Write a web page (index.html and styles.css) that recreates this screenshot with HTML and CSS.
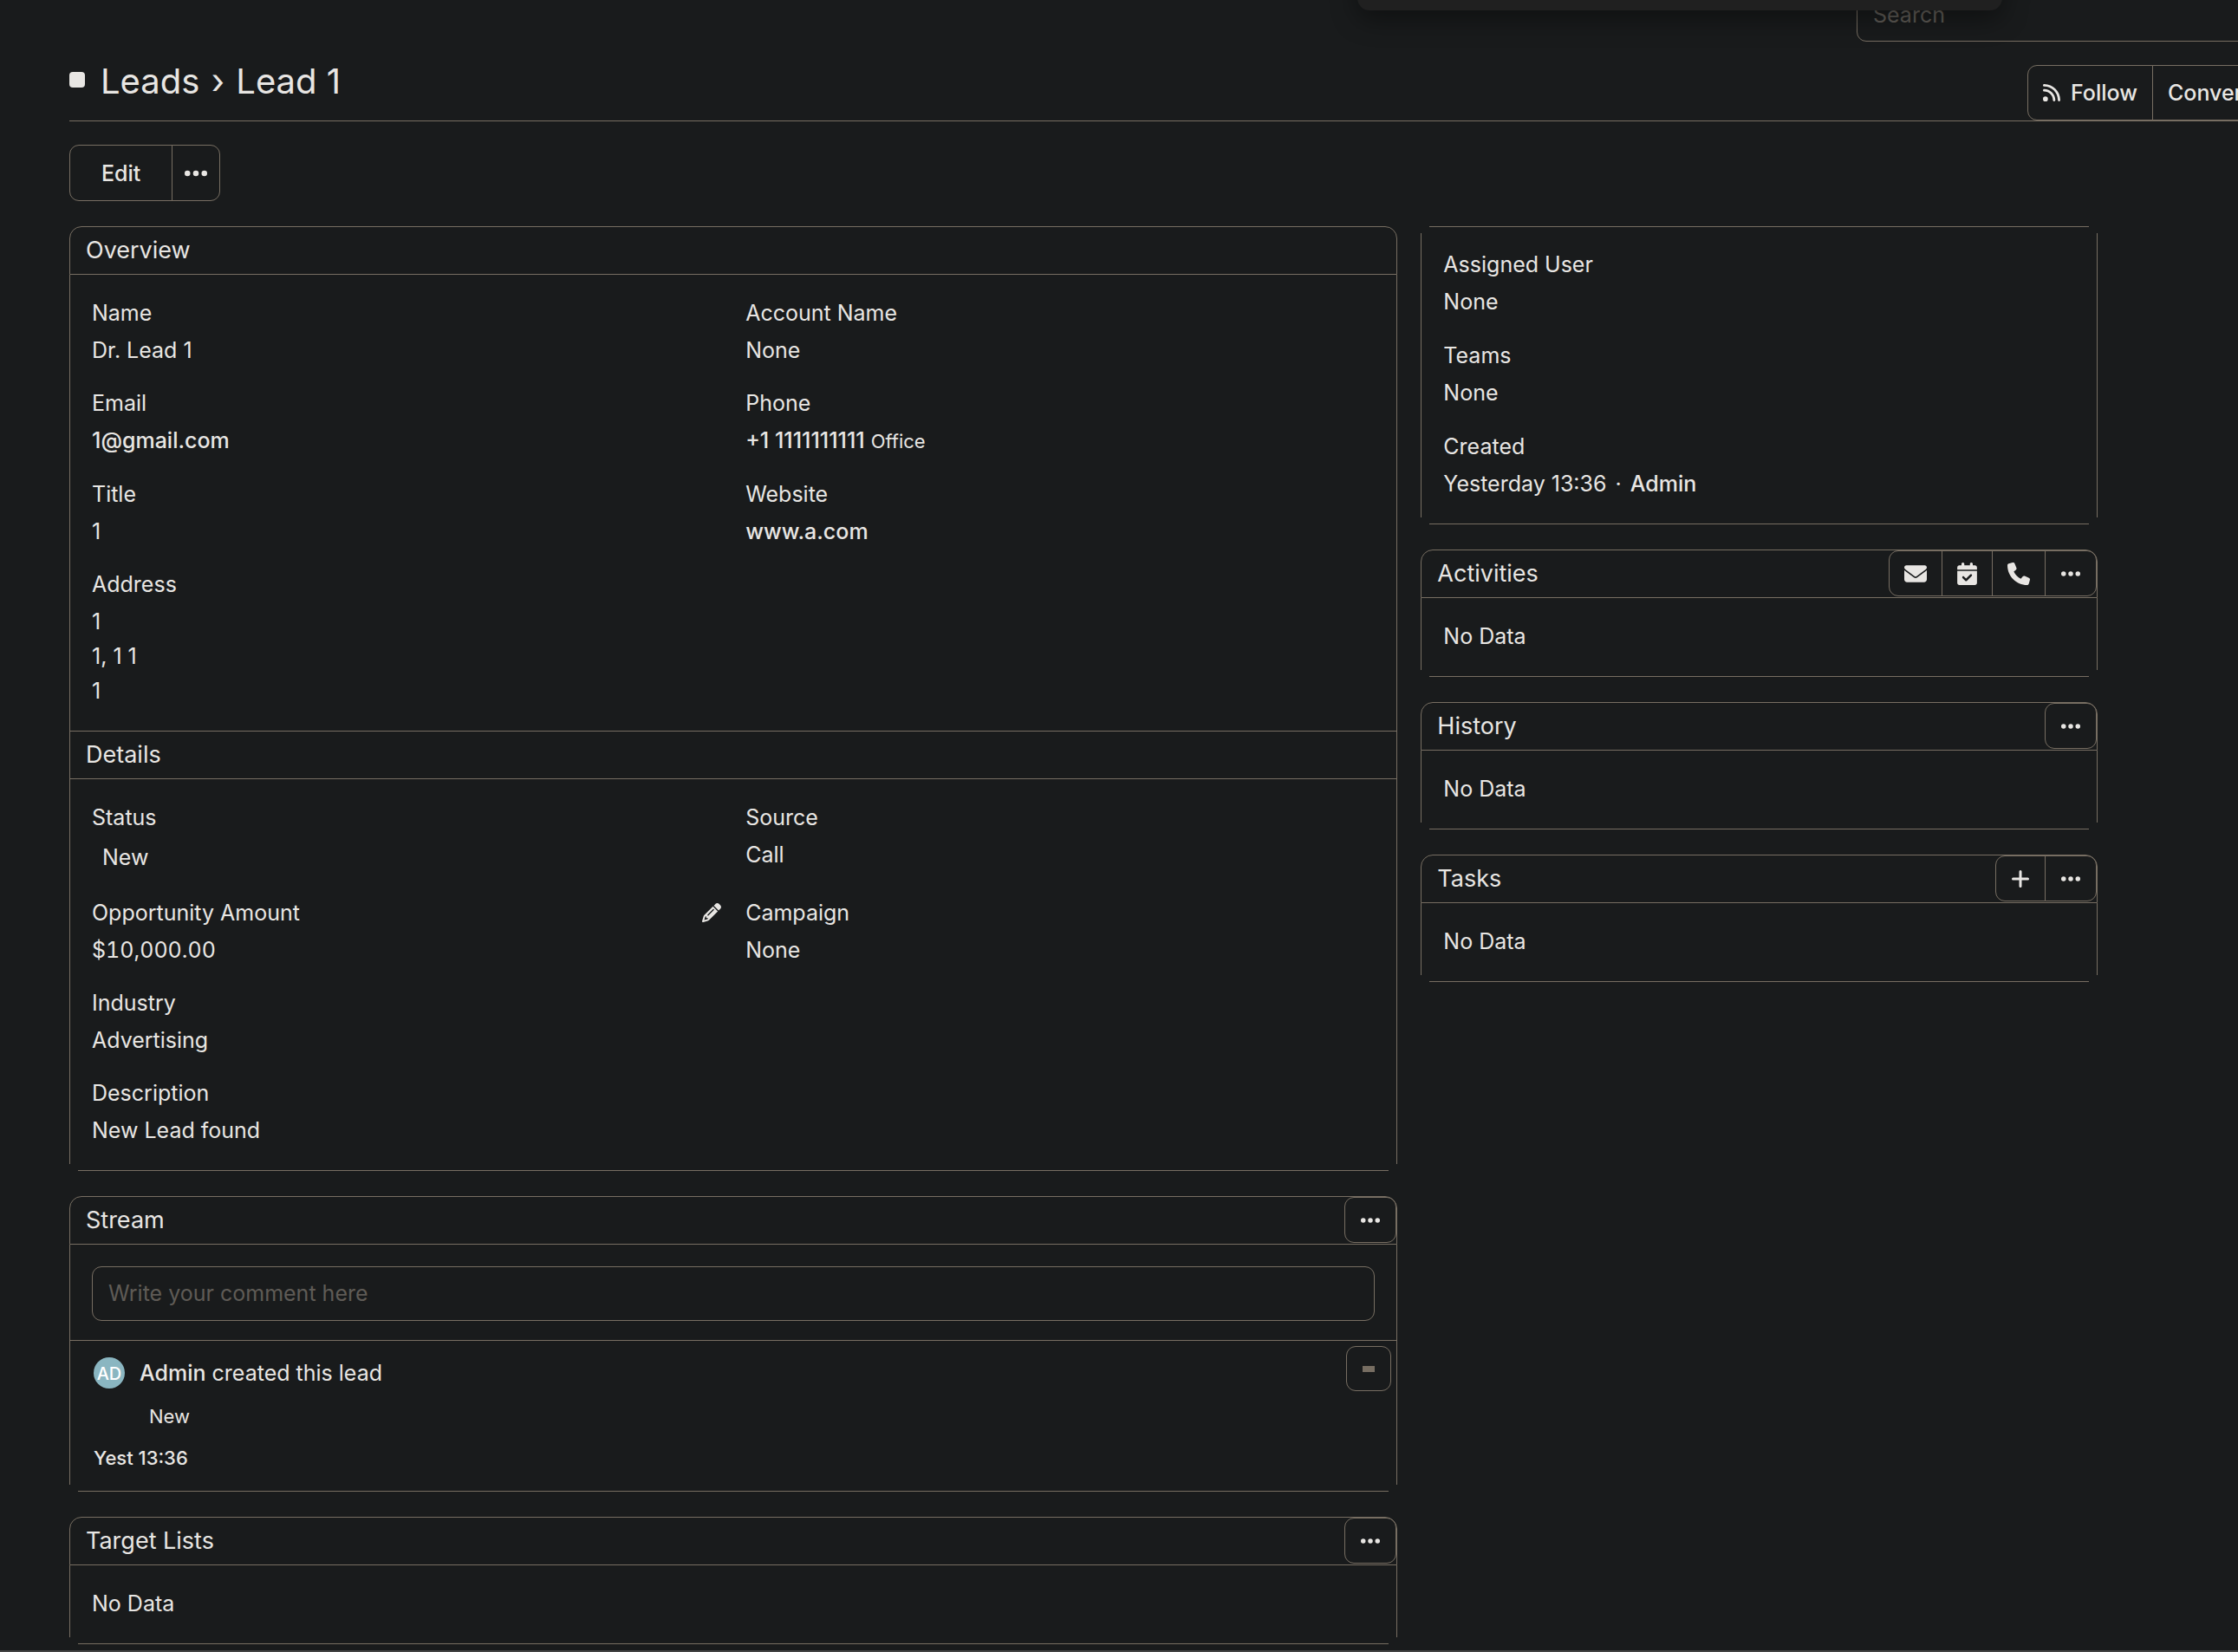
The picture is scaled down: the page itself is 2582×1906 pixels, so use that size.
FILE: index.html
```
<!DOCTYPE html>
<html lang="en">
<head>
  <meta charset="UTF-8">
  <title>Lead 1</title>
  <link rel="stylesheet" href="styles.css">
</head>
<body>

  <!-- Icons -->
  <svg class="sprite" aria-hidden="true">
    <symbol id="i-dots" viewBox="0 0 448 112"><circle cx="56" cy="56" r="56"/><circle cx="224" cy="56" r="56"/><circle cx="392" cy="56" r="56"/></symbol>
    <symbol id="i-rss" viewBox="0 32 448 448"><path d="M0 64C0 46.3 14.3 32 32 32c229.8 0 416 186.2 416 416c0 17.7-14.3 32-32 32s-32-14.3-32-32C384 253.6 226.4 96 32 96C14.3 96 0 81.7 0 64zM0 416a64 64 0 1 1 128 0A64 64 0 1 1 0 416zM32 160c159.1 0 288 128.9 288 288c0 17.7-14.3 32-32 32s-32-14.3-32-32c0-123.7-100.3-224-224-224c-17.7 0-32-14.3-32-32s14.3-32 32-32z"/></symbol>
    <symbol id="i-mail" viewBox="0 0 512 512"><path d="M48 64C21.5 64 0 85.5 0 112c0 15.1 7.1 29.3 19.2 38.4L236.8 313.6c11.4 8.5 27 8.5 38.4 0L492.8 150.4c12.1-9.1 19.2-23.3 19.2-38.4c0-26.5-21.5-48-48-48L48 64zM0 176L0 384c0 35.3 28.7 64 64 64l384 0c35.3 0 64-28.7 64-64l0-208L294.4 339.2c-22.8 17.1-54 17.1-76.8 0L0 176z"/></symbol>
    <symbol id="i-calendar" viewBox="0 0 448 512"><path fill-rule="evenodd" d="M128 0c17.7 0 32 14.3 32 32l0 32 128 0 0-32c0-17.7 14.3-32 32-32s32 14.3 32 32l0 32 48 0c26.5 0 48 21.5 48 48l0 48L0 160l0-48C0 85.5 21.5 64 48 64l48 0 0-32c0-17.7 14.3-32 32-32zM0 192l448 0 0 272c0 26.5-21.5 48-48 48L48 512c-26.5 0-48-21.5-48-48L0 192zM329 305c9.4-9.4 9.4-24.6 0-33.9s-24.6-9.4-33.9 0l-95 95-47-47c-9.4-9.4-24.6-9.4-33.9 0s-9.4 24.6 0 33.9l64 64c9.4 9.4 24.6 9.4 33.9 0L329 305z"/></symbol>
    <symbol id="i-phone" viewBox="0 0 512 512"><path d="M164.9 24.6c-7.7-18.6-28-28.5-47.4-23.2l-88 24C12.1 30.2 0 46 0 64C0 311.4 200.6 512 448 512c18 0 33.8-12.1 38.6-29.5l24-88c5.3-19.4-4.6-39.7-23.2-47.4l-96-40c-16.3-6.8-35.2-2.1-46.3 11.6L304.7 368C234.3 334.7 177.3 277.7 144 207.3L193.3 167c13.7-11.2 18.4-30 11.6-46.3l-40-96z"/></symbol>
    <symbol id="i-plus" viewBox="0 0 20 20"><path d="M10 1.500V18.500M1.500 10H18.500" fill="none" stroke="currentColor" stroke-width="3" stroke-linecap="round"/></symbol>
    <symbol id="i-pencil" viewBox="0 0 512 512"><path d="M410.3 231l11.3-11.3-33.9-33.9-62.1-62.1L291.7 89.8l-11.3 11.3-22.6 22.6L58.6 322.9c-10.4 10.4-18 23.3-22.2 37.4L1 480.7c-2.5 8.4-.2 17.5 6.1 23.7s15.3 8.5 23.7 6.1l120.3-35.4c14.1-4.2 27-11.8 37.4-22.2L387.7 253.7 410.3 231zM160 399.4l-9.1 22.7c-4 3.1-8.5 5.4-13.3 6.9L59.4 452l23-78.1c1.4-4.9 3.8-9.4 6.9-13.3l22.7-9.1 0 32c0 8.8 7.2 16 16 16l32 0zM362.7 18.7L348.3 33.2 325.7 55.8 314.3 67.1l33.9 33.9 62.1 62.1 33.9 33.9 11.3-11.3 22.6-22.6 14.5-14.5c25-25 25-65.5 0-90.5L453.3 18.7c-25-25-65.5-25-90.5 0zm-47.4 168l-144 144c-6.2 6.2-16.4 6.2-22.6 0s-6.2-16.4 0-22.6l144-144c6.2-6.2 16.4-6.2 22.6 0s6.2 16.4 0 22.6z"/></symbol>
  </svg>

  <div class="popover"></div>

  <nav class="navbar">
    <input class="search" type="text" placeholder="Search" aria-label="Search">
  </nav>

  <header class="page-header">
    <h1><span class="scope-icon"></span><a href="#leads">Leads</a> <span class="crumb">›</span> <span>Lead 1</span></h1>
    <div class="header-buttons btn-group">
      <button class="btn"><svg class="icon-rss"><use href="#i-rss"/></svg>Follow</button>
      <button class="btn">Convert</button>
    </div>
  </header>

  <main class="detail">
    <div class="btn-group">
      <button class="btn btn-edit">Edit</button>
      <button class="btn btn-more" aria-label="More"><svg class="dots-lg"><use href="#i-dots"/></svg></button>
    </div>

    <div class="columns">
      <div class="column">

        <section class="panel">
          <div class="panel-heading"><h2>Overview</h2></div>
          <dl class="panel-body fields joined">
            <div><dt>Name</dt><dd>Dr. Lead 1</dd></div>
            <div><dt>Account Name</dt><dd>None</dd></div>
            <div><dt>Email</dt><dd><a href="mailto:1@gmail.com">1@gmail.com</a></dd></div>
            <div><dt>Phone</dt><dd><a href="tel:+11111111111">+1 1111111111</a> <small>Office</small></dd></div>
            <div><dt>Title</dt><dd>1</dd></div>
            <div><dt>Website</dt><dd><a href="#website">www.a.com</a></dd></div>
            <div class="wide"><dt>Address</dt><dd>1<br>1, 1 1<br>1</dd></div>
          </dl>
          <div class="panel-heading inner"><h2>Details</h2></div>
          <dl class="panel-body fields">
            <div><dt>Status</dt><dd class="label-state">New</dd></div>
            <div><dt>Source</dt><dd>Call</dd></div>
            <div><dt>Opportunity Amount <button class="inline-edit" aria-label="Edit amount"><svg><use href="#i-pencil"/></svg></button></dt><dd class="currency">$10,000.00</dd></div>
            <div><dt>Campaign</dt><dd>None</dd></div>
            <div class="wide"><dt>Industry</dt><dd>Advertising</dd></div>
            <div class="wide"><dt>Description</dt><dd>New Lead found</dd></div>
          </dl>
        </section>

        <section class="panel">
          <div class="panel-heading">
            <h2>Stream</h2>
            <div class="btn-group">
              <button class="btn" aria-label="Stream menu"><svg class="dots"><use href="#i-dots"/></svg></button>
            </div>
          </div>
          <div class="post">
            <textarea rows="1" placeholder="Write your comment here" aria-label="Comment"></textarea>
          </div>
          <div class="panel-body note">
            <div class="note-head">
              <span class="avatar">AD</span>
              <span><a href="#admin">Admin</a> created this lead</span>
            </div>
            <div class="note-state">New</div>
            <div class="note-date"><a href="#note">Yest 13:36</a></div>
            <button class="btn note-menu" aria-label="Note menu"><span class="bar"></span></button>
          </div>
        </section>

        <section class="panel">
          <div class="panel-heading">
            <h2>Target Lists</h2>
            <div class="btn-group">
              <button class="btn" aria-label="Target Lists menu"><svg class="dots"><use href="#i-dots"/></svg></button>
            </div>
          </div>
          <div class="panel-body">No Data</div>
        </section>
      </div>

      <div class="column">
        <section class="panel">
          <dl class="panel-body fields open-top">
            <div class="wide"><dt>Assigned User</dt><dd>None</dd></div>
            <div class="wide"><dt>Teams</dt><dd>None</dd></div>
            <div class="wide"><dt>Created</dt><dd>Yesterday 13:36 <span class="sep">·</span> <a href="#admin">Admin</a></dd></div>
          </dl>
        </section>

        <section class="panel">
          <div class="panel-heading">
            <h2>Activities</h2>
            <div class="btn-group">
              <button class="btn" aria-label="Email"><svg class="icon"><use href="#i-mail"/></svg></button>
              <button class="btn" aria-label="Meeting"><svg class="icon icon-narrow"><use href="#i-calendar"/></svg></button>
              <button class="btn" aria-label="Call"><svg class="icon"><use href="#i-phone"/></svg></button>
              <button class="btn" aria-label="Activities menu"><svg class="dots"><use href="#i-dots"/></svg></button>
            </div>
          </div>
          <div class="panel-body">No Data</div>
        </section>

        <section class="panel">
          <div class="panel-heading">
            <h2>History</h2>
            <div class="btn-group">
              <button class="btn" aria-label="History menu"><svg class="dots"><use href="#i-dots"/></svg></button>
            </div>
          </div>
          <div class="panel-body">No Data</div>
        </section>

        <section class="panel">
          <div class="panel-heading">
            <h2>Tasks</h2>
            <div class="btn-group">
              <button class="btn" aria-label="Add task"><svg class="dots plus"><use href="#i-plus"/></svg></button>
              <button class="btn" aria-label="Tasks menu"><svg class="dots"><use href="#i-dots"/></svg></button>
            </div>
          </div>
          <div class="panel-body">No Data</div>
        </section>
      </div>
    </div>
  </main>

  <footer class="page-end"></footer>

</body>
</html>
```
FILE: styles.css
```
* {
  box-sizing: border-box;
}

:root {
  --bg: #191b1c;
  --text: #e8e6e3;
  --line: #776e62;
  --muted: #5f5b56;
}

body {
  margin: 0;
  min-height: 100vh;
  display: flex;
  flex-direction: column;
  overflow-x: hidden;
  background: var(--bg);
  color: var(--text);
  font: 25px/40px Inter, sans-serif;
}

h1, h2, dl, dd {
  margin: 0;
  font-weight: 400;
}

a {
  color: inherit;
  text-decoration: none;
  font-weight: 500;
}

svg {
  display: block;
  fill: currentColor;
}

.sprite {
  display: none;
}

/* Buttons */
.btn {
  display: flex;
  align-items: center;
  justify-content: center;
  padding: 0 17px;
  border: 1px solid var(--line);
  background: transparent;
  color: inherit;
  font: inherit;
  font-weight: 500;
  white-space: nowrap;
  cursor: pointer;
}

.btn-group {
  display: flex;
}

.btn-group .btn {
  height: 65px;
}

.btn-group .btn + .btn {
  margin-left: -1px;
}

.btn-group .btn:first-child {
  border-top-left-radius: 11px;
  border-bottom-left-radius: 11px;
}

.btn-group .btn:last-child {
  border-top-right-radius: 11px;
  border-bottom-right-radius: 11px;
}

.btn-group .btn-edit {
  padding: 0 36px;
}

.btn-group .btn-more {
  padding: 0 14px;
}

.icon {
  width: 26px;
  height: 26px;
}

.icon-narrow {
  width: 23px;
}

.dots {
  width: 22px;
  height: 22px;
  margin: 0 1px;
}

.dots-lg {
  width: 26px;
  height: 26px;
}

.plus {
  width: 20px;
}

/* Top bar */
.popover {
  position: absolute;
  top: -60px;
  left: 1566px;
  width: 744px;
  height: 72px;
  border-radius: 14px;
  background: #202020;
  box-shadow: 0 10px 30px rgba(0, 0, 0, 0.4);
}

.navbar {
  display: flex;
  justify-content: flex-end;
  align-items: flex-end;
  height: 48px;
}

.search {
  flex: none;
  width: 480px;
  height: 62px;
  margin-right: -40px;
  padding: 0 18px;
  border: 1px solid var(--line);
  border-radius: 11px;
  background: transparent;
  color: inherit;
  font: inherit;
}

::placeholder {
  color: var(--muted);
  opacity: 1;
}

.page-header {
  display: flex;
  justify-content: space-between;
  align-items: flex-end;
  height: 92px;
  margin-left: 80px;
  border-bottom: 1px solid var(--line);
}

h1 {
  padding-bottom: 18px;
  font-size: 40px;
  line-height: 54px;
}

h1 a {
  font-weight: 400;
}

.crumb {
  margin: 0 2px;
}

.scope-icon {
  display: inline-block;
  width: 18px;
  height: 18px;
  margin-right: 18px;
  border-radius: 4px;
  background: var(--text);
  vertical-align: 7px;
}

.header-buttons {
  width: 243px;
}

.header-buttons .btn {
  height: 64px;
}

.icon-rss {
  width: 20px;
  height: 20px;
  margin-right: 12px;
}

/* Record */
.detail {
  padding: 27px 162px 0 80px;
}

.columns {
  display: grid;
  grid-template-columns: 53fr 27fr;
  gap: 27px;
  margin-top: 29px;
}

.column {
  display: flex;
  flex-direction: column;
  gap: 29px;
}

.panel-heading {
  display: flex;
  justify-content: space-between;
  height: 56px;
  padding-left: 18px;
  border: 1px solid var(--line);
  border-radius: 14px 14px 0 0;
}

.panel-heading.inner {
  margin-top: -1px;
  border-radius: 0;
}

.panel-heading .btn {
  height: 53px;
}

h2 {
  font-size: 27px;
  line-height: 53px;
}

/* The side and bottom lines stop short of the bottom corners */
.panel-body {
  position: relative;
  padding: 24px 26px 27px;
  background:
    linear-gradient(var(--line), var(--line)) 0 0 / 1px calc(100% - 8px) no-repeat,
    linear-gradient(var(--line), var(--line)) 100% 0 / 1px calc(100% - 8px) no-repeat,
    linear-gradient(var(--line), var(--line)) 50% 100% / calc(100% - 20px) 1px no-repeat;
}

.panel-body.joined {
  padding: 24px 25px 27px;
  border: solid var(--line);
  border-width: 0 1px;
  background: none;
}

.panel-body.open-top {
  background:
    linear-gradient(var(--line), var(--line)) 0 50% / 1px calc(100% - 16px) no-repeat,
    linear-gradient(var(--line), var(--line)) 100% 50% / 1px calc(100% - 16px) no-repeat,
    linear-gradient(var(--line), var(--line)) 50% 0 / calc(100% - 20px) 1px no-repeat,
    linear-gradient(var(--line), var(--line)) 50% 100% / calc(100% - 20px) 1px no-repeat;
}

.fields {
  display: grid;
  grid-template-columns: 1fr 1fr;
  gap: 21px 28px;
}

.fields.open-top {
  row-gap: 22px;
}

.fields .wide {
  grid-column: 1 / -1;
}

dt {
  display: flex;
  justify-content: space-between;
  margin-bottom: 3px;
}

small {
  font-size: 22px;
}

.sep {
  margin: 0 3px;
}

.currency {
  font-variant-numeric: tabular-nums;
}

.label-state {
  padding: 3px 12px;
}

.inline-edit {
  padding: 0;
  border: 0;
  background: none;
  color: inherit;
  cursor: pointer;
}

.inline-edit svg {
  width: 22px;
  height: 22px;
}

/* Stream */
.post {
  padding: 25px 25px 22px;
  border: solid var(--line);
  border-width: 0 1px 1px;
}

textarea {
  display: block;
  width: 100%;
  height: 63px;
  padding: 10px 18px;
  border: 1px solid var(--line);
  border-radius: 11px;
  background: transparent;
  color: inherit;
  font: inherit;
  resize: none;
  overflow: hidden;
}

.note {
  padding: 17px 28px 24px;
}

.note-head {
  display: flex;
  align-items: center;
  gap: 17px;
}

.avatar {
  width: 36px;
  height: 36px;
  border-radius: 50%;
  background: #8ab6c1;
  color: #fff;
  font-size: 20px;
  font-weight: 500;
  line-height: 38px;
  text-align: center;
}

.note-state,
.note-date {
  font-size: 22px;
  line-height: 30px;
}

.note-state {
  margin: 15px 0 18px 64px;
}

.note-menu {
  position: absolute;
  top: 6px;
  right: 7px;
  width: 52px;
  height: 52px;
  border-radius: 11px;
}

.bar {
  flex: none;
  width: 14px;
  height: 7px;
  background: var(--line);
}

.page-end {
  height: 2px;
  margin-top: auto;
  background: #444;
}
```
